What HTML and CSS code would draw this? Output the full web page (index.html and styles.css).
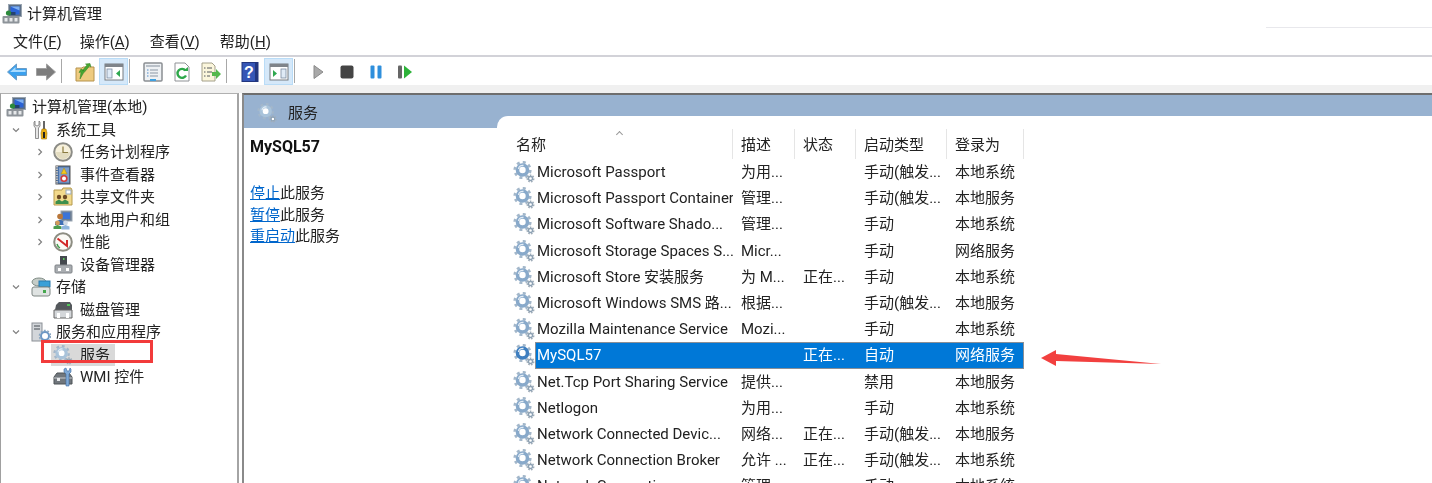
FILE: index.html
```html
<!doctype html>
<html>
<head>
  <meta charset="utf-8">
  <title>计算机管理</title>
  <link rel="stylesheet" href="styles.css">
</head>
<body>
  <svg class="sprite" width="0" height="0">
    <defs>
      <symbol id="i-gear" viewBox="0 0 22 22">
        <circle cx="9.500" cy="9" r="7.800" fill="none" stroke="#a3b7ca" stroke-width="2.600" stroke-dasharray="3 3.130"/>
        <circle cx="9.500" cy="9" r="5" fill="#fff" stroke="currentColor" stroke-width="3.600"/>
        <path d="M5.500 8a4 4 0 0 1 5-3.500" fill="none" stroke="#e4edf5" stroke-width="1.300"/>
        <circle cx="17.500" cy="17.500" r="3.200" fill="none" stroke="#a0adb8" stroke-width="1.600" stroke-dasharray="1.600 1.200"/>
        <circle cx="17.500" cy="17.500" r="2" fill="#fff" stroke="#8ca1b4" stroke-width="1.300"/>
      </symbol>
      <symbol id="i-computer" viewBox="0 0 20 20">
        <rect x="6.500" y="0.500" width="13" height="12" fill="#5c6f86" stroke="#9aa5b1"/>
        <rect x="8.500" y="2.500" width="9" height="8" fill="#2a63d6"/>
        <path d="M8.500 2.500h9v4z" fill="#7fb0f0"/>
        <rect x="8.500" y="8" width="5" height="3" fill="#23426f"/>
        <rect x="0.500" y="12" width="17" height="7.500" rx="1" fill="#8d9399"/>
        <rect x="2.500" y="14" width="3" height="3.500" fill="#e6e8ea"/>
        <rect x="7.500" y="14" width="3" height="3.500" fill="#e6e8ea"/>
        <rect x="12.500" y="14" width="3" height="3.500" fill="#e6e8ea"/>
        <circle cx="6.500" cy="9" r="2.600" fill="#2c8a3c"/>
      </symbol>
      <symbol id="i-tools" viewBox="0 0 20 20">
        <path d="M4 1v4l2 1 2-1V1l1 1v4L7.500 8v10.500H4.500V8L3 6V2z" fill="#e6e6e6" stroke="#777" stroke-width=".8"/>
        <rect x="12" y="1" width="2" height="9" fill="#666"/>
        <path d="M11 9h4l1 4-.500 6h-5l-.500-6z" fill="#e8ad14" stroke="#a97a08" stroke-width=".6"/>
        <rect x="12" y="12" width="2" height="6" fill="#222"/>
      </symbol>
      <symbol id="i-clock" viewBox="0 0 20 20">
        <circle cx="10" cy="10" r="8.800" fill="#f7f1dc" stroke="#8c8c86" stroke-width="2"/>
        <path d="M3 10a7 7 0 0 0 14 0z" fill="#e3dcc0"/>
        <path d="M10 4.500V10.500H15" fill="none" stroke="#8a7a40" stroke-width="1.200"/>
      </symbol>
      <symbol id="i-event" viewBox="0 0 20 20">
        <rect x="3" y="1" width="14" height="18" fill="#4a72a8" stroke="#555"/>
        <path d="M4 1v18" stroke="#bbb" stroke-width="2" stroke-dasharray="1.500 1"/>
        <rect x="6" y="2.500" width="10" height="15" fill="#7f9fcb"/>
        <path d="M11 3l3 6H8z" fill="#f3c81e" stroke="#a5851a" stroke-width=".5"/>
        <circle cx="11" cy="13.500" r="2.800" fill="#fff" stroke="#cf3b3b" stroke-width="1.600"/>
      </symbol>
      <symbol id="i-share" viewBox="0 0 20 20">
        <path d="M1 3h8l1-2h8l1 2v15H1z" fill="#f2d98c" stroke="#b59a4c"/>
        <rect x="13" y="3" width="5" height="4" fill="#fff" stroke="#9ab"/>
        <circle cx="6" cy="10" r="2.200" fill="#6d4a24"/>
        <circle cx="12" cy="10" r="2.200" fill="#6d4a24"/>
        <path d="M2.500 17v-2.500l3.500-2 3 2 3-2 3.500 2V17z" fill="#3d8f4c"/>
      </symbol>
      <symbol id="i-users" viewBox="0 0 20 20">
        <rect x="8" y="1" width="11" height="10" fill="#6c7f96" stroke="#9aa5b1"/>
        <rect x="10" y="2.500" width="7" height="6.500" fill="#3b74d8"/>
        <circle cx="7" cy="6.500" r="2.800" fill="#b9773a"/>
        <path d="M2 15v-3l5-2.500 5 2.500v3z" fill="#3f6fb5"/>
        <circle cx="4.500" cy="13" r="2.400" fill="#d39b5a"/>
        <path d="M0.500 19v-2.500l4-1.500 4 1.500V19z" fill="#4a9a4c"/>
        <circle cx="12.500" cy="13" r="2.400" fill="#cfd8e4"/>
        <path d="M8.500 19.500v-3l4-1.500 4 1.500v3z" fill="#8fb5dd"/>
      </symbol>
      <symbol id="i-perf" viewBox="0 0 20 20">
        <circle cx="10" cy="10" r="8.800" fill="#fbfaf5" stroke="#8d8d82" stroke-width="2"/>
        <path d="M4.500 6.500L14 14V8" fill="none" stroke="#d22a2a" stroke-width="2"/>
        <path d="M4 12a6.500 6.500 0 0 0 3 4" fill="none" stroke="#3f9a4a" stroke-width="1.400"/>
      </symbol>
      <symbol id="i-device" viewBox="0 0 20 20">
        <rect x="7" y="1" width="7" height="9" fill="#44494e"/>
        <rect x="10" y="3" width="1.500" height="2" fill="#5ecb5e"/>
        <rect x="2" y="10" width="17" height="8" rx="1" fill="#a9adb1" stroke="#808488"/>
        <rect x="5" y="13" width="3" height="3" fill="#fff"/>
        <rect x="13" y="13" width="3" height="3" fill="#fff"/>
      </symbol>
      <symbol id="i-storage" viewBox="0 0 20 20">
        <ellipse cx="8" cy="5" rx="7" ry="4" fill="#c6cdc8" stroke="#7e8a84"/>
        <rect x="8" y="4" width="11" height="6" fill="#3ba0d8" stroke="#2b7bad"/>
        <rect x="1" y="10" width="18" height="9" rx="2" fill="#dfe3e2" stroke="#7d8582"/>
        <rect x="12" y="13" width="3" height="3" fill="#46a84e"/>
      </symbol>
      <symbol id="i-disk" viewBox="0 0 20 20">
        <path d="M3 5l3-3h11l2 3v5H2z" fill="#54585c"/>
        <rect x="14" y="4" width="3" height="2" fill="#54c45a"/>
        <path d="M1 10h18v8h-18z" fill="#d4d7da" stroke="#666"/>
        <rect x="4" y="13" width="3" height="5" fill="#fff"/>
        <rect x="13" y="13" width="3" height="5" fill="#fff"/>
      </symbol>
      <symbol id="i-server" viewBox="0 0 20 20">
        <rect x="1" y="1" width="10" height="18" fill="#d3d6da" stroke="#8b9096"/>
        <path d="M3 4h6M3 7h6" stroke="#74797f" stroke-width="1.300"/>
        <circle cx="14" cy="14" r="4" fill="#fff" stroke="#6c97c4" stroke-width="2"/>
        <circle cx="14" cy="14" r="5.600" fill="none" stroke="#8aa6c0" stroke-width="1.400" stroke-dasharray="2 1.500"/>
      </symbol>
      <symbol id="i-wmi" viewBox="0 0 20 20">
        <path d="M4 6h12l3 4v7H1v-7z" fill="#70767c" stroke="#4d5256"/>
        <path d="M1 11h18" stroke="#c9ccd0"/>
        <rect x="4" y="11" width="3" height="3" fill="#e8eaec"/>
        <path d="M13 1l1 3 2 0 1-3 1 1v3l-2 2v12h-3V7l-2-2V2z" fill="#7fa9d6" stroke="#3e6da3" stroke-width=".6"/>
      </symbol>
      <symbol id="i-back" viewBox="0 0 20 20">
        <path d="M0.500 10l9-8v4.500h10v7h-10V18z" fill="#3aa0ee" stroke="#6a9cc6"/>
        <path d="M3 10l5.500-5V8h10v2z" fill="#a8dbff"/>
      </symbol>
      <symbol id="i-forward" viewBox="0 0 20 20">
        <path d="M19.500 10l-9-8v4.500H.500v7h10V18z" fill="#7d7d7d" stroke="#a0a0a0"/>
      </symbol>
      <symbol id="i-up" viewBox="0 0 20 20">
        <path d="M1 6h6l1-1h11v14H1z" fill="#eecb80" stroke="#b5924c"/>
        <path d="M5 17l1-7-2 .500L6 7l3 1.500-1.500 .500L9 6.500 12 3 10.500 2 15 1.500l1 3.500-1.500-1L10 9.500l-1.500 1.500z" fill="#49a832" stroke="#2f7e22" stroke-width=".5"/>
      </symbol>
      <symbol id="i-panel-l" viewBox="0 0 20 20">
        <rect x="1" y="2" width="18" height="16" fill="#fff" stroke="#777b80"/>
        <rect x="1" y="2" width="18" height="3" fill="#7f848a"/>
        <rect x="3" y="7" width="5" height="9" fill="#dfeaf6" stroke="#7c8ca0" stroke-width=".8"/>
        <path d="M16 8v7l-4-3.500z" fill="#2fa84f"/>
      </symbol>
      <symbol id="i-panel-r" viewBox="0 0 20 20">
        <rect x="1" y="2" width="18" height="16" fill="#fff" stroke="#777b80"/>
        <rect x="1" y="2" width="18" height="3" fill="#7f848a"/>
        <rect x="12" y="7" width="5" height="9" fill="#dfeaf6" stroke="#7c8ca0" stroke-width=".8"/>
        <path d="M4 8v7l4-3.500z" fill="#2fa84f"/>
      </symbol>
      <symbol id="i-props" viewBox="0 0 20 20">
        <rect x="1" y="1" width="18" height="18" rx="1" fill="#eef1f4" stroke="#8a8e92" stroke-width="1.500"/>
        <rect x="3" y="3" width="14" height="2" fill="#b9c0c8"/>
        <path d="M7 8h8M7 11h8M7 14h8" stroke="#8b97a5"/>
        <path d="M4 8h1.500M4 11h1.500M4 14h1.500" stroke="#4f8cc8" stroke-width="1.200"/>
        <rect x="7" y="17" width="6" height="2" fill="#3fa0e0"/>
      </symbol>
      <symbol id="i-refresh" viewBox="0 0 20 20">
        <path d="M3 1h10l4 4v14H3z" fill="#fff" stroke="#8f9296"/>
        <path d="M14 13.500a4.500 4.500 0 1 1-.500-5" fill="none" stroke="#2ea84a" stroke-width="2.400"/>
        <path d="M11 9h5V5z" fill="#2ea84a"/>
      </symbol>
      <symbol id="i-export" viewBox="0 0 20 20">
        <path d="M1 1h10l3 3v15H1z" fill="#fbf6dc" stroke="#a4a08a"/>
        <path d="M3 6h1.500M6 6h5M3 10h1.500M6 10h5M3 14h1.500M6 14h3" stroke="#55595e"/>
        <path d="M11 10h4V7l5 5-5 5v-3h-4z" fill="#55b84c"/>
      </symbol>
      <symbol id="i-help" viewBox="0 0 20 20">
        <rect x="2" y="0.500" width="16" height="19" fill="#3556b6" stroke="#22367f"/>
        <path d="M15 1L18 .500v19H15z" fill="#22367f"/>
        <text x="9" y="16" text-anchor="middle" font-family="Liberation Sans" font-weight="700" font-size="16" fill="#fff">?</text>
      </symbol>
    </defs>
  </svg>

  <div class="window">
    <div class="titlebar">
      <svg class="icon"><use href="#i-computer"/></svg>
      <span>计算机管理</span>
    </div>

    <div class="menubar">
      <span>文件(<u>F</u>)</span>
      <span>操作(<u>A</u>)</span>
      <span>查看(<u>V</u>)</span>
      <span>帮助(<u>H</u>)</span>
    </div>

    <div class="toolbar">
      <div class="tb-group">
        <span class="tb-btn"><svg class="icon"><use href="#i-back"/></svg></span>
        <span class="tb-btn"><svg class="icon"><use href="#i-forward"/></svg></span>
      </div>
      <i class="tb-sep"></i>
      <div class="tb-group">
        <span class="tb-btn"><svg class="icon"><use href="#i-up"/></svg></span>
        <span class="tb-btn active"><svg class="icon"><use href="#i-panel-l"/></svg></span>
      </div>
      <i class="tb-sep"></i>
      <div class="tb-group">
        <span class="tb-btn"><svg class="icon"><use href="#i-props"/></svg></span>
        <span class="tb-btn"><svg class="icon"><use href="#i-refresh"/></svg></span>
        <span class="tb-btn"><svg class="icon"><use href="#i-export"/></svg></span>
      </div>
      <i class="tb-sep"></i>
      <div class="tb-group">
        <span class="tb-btn"><svg class="icon"><use href="#i-help"/></svg></span>
        <span class="tb-btn active"><svg class="icon"><use href="#i-panel-r"/></svg></span>
      </div>
      <i class="tb-sep"></i>
      <div class="tb-group">
        <span class="tb-btn"><svg class="media" viewBox="0 0 16 16"><path d="M4 1.500L13 8l-9 6.500z" fill="#a9a9a9" stroke="#8a8a8a"/></svg></span>
        <span class="tb-btn"><svg class="media" viewBox="0 0 16 16"><rect x="1.500" y="1.500" width="13" height="13" rx="2" fill="#444"/></svg></span>
        <span class="tb-btn"><svg class="media" viewBox="0 0 16 16"><rect x="2.500" y="1.500" width="4" height="13" rx="1" fill="#2f8fdc"/><rect x="9.500" y="1.500" width="4" height="13" rx="1" fill="#2f8fdc"/></svg></span>
        <span class="tb-btn"><svg class="media" viewBox="0 0 16 16"><rect x="1" y="1.500" width="4" height="13" rx="1" fill="#666"/><path d="M7 1.500L15 8l-8 6.500z" fill="#2eb33a"/></svg></span>
      </div>
    </div>

    <div class="panes">
      <div class="tree">
        <div class="tree-row lvl0"><span class="tree-item"><svg class="icon"><use href="#i-computer"/></svg>计算机管理(本地)</span></div>
        <div class="tree-row lvl1"><svg class="twist" viewBox="0 0 12 12"><path d="M3 4.500l3 3 3-3"/></svg><span class="tree-item"><svg class="icon"><use href="#i-tools"/></svg>系统工具</span></div>
        <div class="tree-row lvl2"><svg class="twist" viewBox="0 0 12 12"><path d="M4.500 3l3 3-3 3"/></svg><span class="tree-item"><svg class="icon"><use href="#i-clock"/></svg>任务计划程序</span></div>
        <div class="tree-row lvl2"><svg class="twist" viewBox="0 0 12 12"><path d="M4.500 3l3 3-3 3"/></svg><span class="tree-item"><svg class="icon"><use href="#i-event"/></svg>事件查看器</span></div>
        <div class="tree-row lvl2"><svg class="twist" viewBox="0 0 12 12"><path d="M4.500 3l3 3-3 3"/></svg><span class="tree-item"><svg class="icon"><use href="#i-share"/></svg>共享文件夹</span></div>
        <div class="tree-row lvl2"><svg class="twist" viewBox="0 0 12 12"><path d="M4.500 3l3 3-3 3"/></svg><span class="tree-item"><svg class="icon"><use href="#i-users"/></svg>本地用户和组</span></div>
        <div class="tree-row lvl2"><svg class="twist" viewBox="0 0 12 12"><path d="M4.500 3l3 3-3 3"/></svg><span class="tree-item"><svg class="icon"><use href="#i-perf"/></svg>性能</span></div>
        <div class="tree-row lvl2"><i class="twist"></i><span class="tree-item"><svg class="icon"><use href="#i-device"/></svg>设备管理器</span></div>
        <div class="tree-row lvl1"><svg class="twist" viewBox="0 0 12 12"><path d="M3 4.500l3 3 3-3"/></svg><span class="tree-item"><svg class="icon"><use href="#i-storage"/></svg>存储</span></div>
        <div class="tree-row lvl2"><i class="twist"></i><span class="tree-item"><svg class="icon"><use href="#i-disk"/></svg>磁盘管理</span></div>
        <div class="tree-row lvl1"><svg class="twist" viewBox="0 0 12 12"><path d="M3 4.500l3 3 3-3"/></svg><span class="tree-item"><svg class="icon"><use href="#i-server"/></svg>服务和应用程序</span></div>
        <div class="tree-row lvl2"><i class="twist"></i><span class="tree-item selected"><svg class="icon gear faded"><use href="#i-gear"/></svg>服务</span></div>
        <div class="tree-row lvl2"><i class="twist"></i><span class="tree-item"><svg class="icon"><use href="#i-wmi"/></svg>WMI 控件</span></div>
      </div>

      <div class="main">
        <div class="main-head">
          <svg class="icon gear faded"><use href="#i-gear"/></svg>
          <span>服务</span>
        </div>
        <div class="main-body">
          <div class="actions">
            <h2>MySQL57</h2>
            <p><a href="#">停止</a>此服务</p>
            <p><a href="#">暂停</a>此服务</p>
            <p><a href="#">重启动</a>此服务</p>
          </div>

          <div class="list">
            <div class="cols heading">
              <span class="sorted">名称</span><span>描述</span><span>状态</span><span>启动类型</span><span>登录为</span>
            </div>
            <div class="row"><svg class="icon gear"><use href="#i-gear"/></svg><div class="cols"><span>Microsoft Passport</span><span>为用...</span><span></span><span>手动(触发...</span><span>本地系统</span></div></div>
            <div class="row"><svg class="icon gear"><use href="#i-gear"/></svg><div class="cols"><span>Microsoft Passport Container</span><span>管理...</span><span></span><span>手动(触发...</span><span>本地服务</span></div></div>
            <div class="row"><svg class="icon gear"><use href="#i-gear"/></svg><div class="cols"><span>Microsoft Software Shado...</span><span>管理...</span><span></span><span>手动</span><span>本地系统</span></div></div>
            <div class="row"><svg class="icon gear"><use href="#i-gear"/></svg><div class="cols"><span>Microsoft Storage Spaces S...</span><span>Micr...</span><span></span><span>手动</span><span>网络服务</span></div></div>
            <div class="row"><svg class="icon gear"><use href="#i-gear"/></svg><div class="cols"><span>Microsoft Store 安装服务</span><span>为 M...</span><span>正在...</span><span>手动</span><span>本地系统</span></div></div>
            <div class="row"><svg class="icon gear"><use href="#i-gear"/></svg><div class="cols"><span>Microsoft Windows SMS 路...</span><span>根据...</span><span></span><span>手动(触发...</span><span>本地服务</span></div></div>
            <div class="row"><svg class="icon gear"><use href="#i-gear"/></svg><div class="cols"><span>Mozilla Maintenance Service</span><span>Mozi...</span><span></span><span>手动</span><span>本地系统</span></div></div>
            <div class="row current"><svg class="icon gear"><use href="#i-gear"/></svg><div class="cols"><span>MySQL57</span><span></span><span>正在...</span><span>自动</span><span>网络服务</span></div></div>
            <div class="row"><svg class="icon gear"><use href="#i-gear"/></svg><div class="cols"><span>Net.Tcp Port Sharing Service</span><span>提供...</span><span></span><span>禁用</span><span>本地服务</span></div></div>
            <div class="row"><svg class="icon gear"><use href="#i-gear"/></svg><div class="cols"><span>Netlogon</span><span>为用...</span><span></span><span>手动</span><span>本地系统</span></div></div>
            <div class="row"><svg class="icon gear"><use href="#i-gear"/></svg><div class="cols"><span>Network Connected Devic...</span><span>网络...</span><span>正在...</span><span>手动(触发...</span><span>本地服务</span></div></div>
            <div class="row"><svg class="icon gear"><use href="#i-gear"/></svg><div class="cols"><span>Network Connection Broker</span><span>允许 ...</span><span>正在...</span><span>手动(触发...</span><span>本地系统</span></div></div>
            <div class="row"><svg class="icon gear"><use href="#i-gear"/></svg><div class="cols"><span>Network Connections</span><span>管理...</span><span></span><span>手动</span><span>本地系统</span></div></div>
          </div>
        </div>
      </div>
    </div>
  </div>

  <!-- annotations drawn over the screenshot -->
  <div class="mark-box"></div>
  <svg class="mark-arrow" viewBox="0 0 122 20" width="122" height="20">
    <path d="M1 9L16 1V5L121 15 16 12V17z" fill="#f2403f"/>
  </svg>
</body>
</html>
```

FILE: styles.css
```css
html, body {
  margin: 0;
  height: 483px;
  overflow: hidden;
  background: #fff;
}

body {
  position: relative;
  color: #222;
  font-family: Roboto, "Noto Sans CJK SC", sans-serif;
  font-size: 15px;
  line-height: 20px;
}

.sprite {
  display: block;
}

.icon {
  display: block;
  flex: none;
  width: 20px;
  height: 20px;
}

.window {
  display: flex;
  flex-direction: column;
  height: 483px;
  filter: blur(.3px);
}

.titlebar {
  display: flex;
  flex: none;
  align-items: center;
  gap: 5px;
  height: 28px;
  padding: 0 0 1px 2px;
  box-sizing: border-box;
  background: linear-gradient(#e8e8ec, #e8e8ec) no-repeat right bottom / 166px 1px;
}

.menubar {
  display: flex;
  flex: none;
  align-items: center;
  gap: 20px;
  height: 29px;
  padding: 1px 0 0 13px;
  box-sizing: border-box;
  border-bottom: 2px solid #d2d2d8;
}

.menubar span:first-child {
  margin-right: -2px;
}

.toolbar {
  display: flex;
  flex: none;
  align-items: flex-end;
  height: 28px;
}

.tb-group {
  display: flex;
  margin-left: 2px;
}

.tb-btn {
  display: flex;
  align-items: center;
  justify-content: center;
  width: 29px;
  height: 27px;
  box-sizing: border-box;
}

.tb-btn.active {
  background: #d5e8f9;
  border: 1px solid #b9dcf7;
}

.tb-sep {
  width: 1px;
  height: 24px;
  margin: 0 6px 2px 1px;
  background: #a8a8a8;
}

.media {
  width: 16px;
  height: 16px;
}

.panes {
  display: flex;
  flex: 1;
  min-height: 0;
  padding-top: 8px;
  background: linear-gradient(#f0f0f0, #f0f0f0) no-repeat top / 100% 8px;
}

.tree {
  flex: none;
  width: 236px;
  margin-right: 3px;
  padding-top: 2px;
  border-top: 1px solid #b0b0b0;
  border-left: 1px solid #a0a0a0;
  border-right: 2px solid #a4a4a4;
}

.tree-row {
  display: flex;
  align-items: center;
  height: 22.5px;
}

.tree-item {
  display: flex;
  align-items: center;
  height: 100%;
}

.tree-item .icon {
  margin-right: 6px;
}

.lvl0 {
  padding-left: 5px;
}

.lvl1 {
  padding-left: 9px;
}

.lvl1 .tree-item {
  margin-left: 9px;
}

.lvl1 .icon {
  margin-right: 5px;
}

.lvl2 {
  padding-left: 33px;
}

.lvl2 .tree-item {
  margin-left: 7px;
}

.lvl2 .icon {
  margin-right: 7px;
}

.twist {
  flex: none;
  width: 12px;
  height: 12px;
  fill: none;
  stroke: #808080;
  stroke-width: 1.2;
}

.lvl2 .tree-item.selected {
  margin-left: 5px;
  padding: 0 5px 0 2px;
  background: #d9d9d9;
}

.gear {
  color: #88a9ca;
}

.gear.faded {
  color: #a9c3da;
}

.main {
  flex: 1;
  display: flex;
  flex-direction: column;
  min-width: 0;
  border-top: 2px solid #6e6e6e;
  border-left: 2px solid #8a8a8a;
}

.main-head {
  display: flex;
  flex: none;
  align-items: flex-start;
  gap: 11px;
  height: 33px;
  padding: 8px 0 0 13px;
  box-sizing: border-box;
  background: #98b2d0;
}

.main-body {
  display: flex;
  flex: 1;
  min-height: 0;
}

.actions {
  flex: none;
  width: 247px;
  padding: 9px 0 0 6px;
}

.actions h2 {
  margin: 0 0 26px;
  font-size: 16px;
  font-weight: 700;
  color: #111;
}

.actions p {
  margin: 0;
  line-height: 21.5px;
}

.actions a {
  color: #0066cc;
}

.list {
  flex: 1;
  min-width: 0;
  margin-top: -12px;
  padding: 13px 0 0 15px;
  background: #fff;
  border-top-left-radius: 11px;
}

.cols {
  display: grid;
  grid-template-columns: 198px 62px 61px 91px 77px;
  align-items: center;
  height: 100%;
}

.cols span {
  overflow: hidden;
  white-space: nowrap;
  padding-left: 8px;
}

.cols span:first-child {
  padding-left: 2px;
}

.heading {
  grid-template-columns: 221px 62px 61px 91px 77px;
  width: 512px;
  height: 30px;
}

.heading span {
  position: relative;
  height: 100%;
  line-height: 32px;
  border-right: 1px solid #e5e5e5;
  box-sizing: border-box;
}

.heading span:first-child {
  padding-left: 4px;
}

.heading .sorted::after {
  content: "";
  position: absolute;
  left: 105px;
  top: 3px;
  width: 4px;
  height: 4px;
  border-top: 1px solid #999;
  border-left: 1px solid #999;
  transform: rotate(45deg);
}

.row {
  display: flex;
  align-items: center;
  height: 26.2px;
}

.row .icon {
  width: 22px;
  height: 22px;
  margin-left: 1px;
}

.row .cols {
  flex: none;
  width: 489px;
  box-sizing: border-box;
}

.row.current .cols {
  color: #fff;
  background: #0078d7;
  outline: 1px solid #8a8f96;
  outline-offset: -1px;
}

.row.current .gear {
  color: #3f7fc0;
}

.mark-box {
  position: absolute;
  left: 41px;
  top: 340px;
  width: 106px;
  height: 17px;
  border: 3px solid #f23b3b;
}

.mark-arrow {
  position: absolute;
  left: 1040px;
  top: 349px;
}
```
